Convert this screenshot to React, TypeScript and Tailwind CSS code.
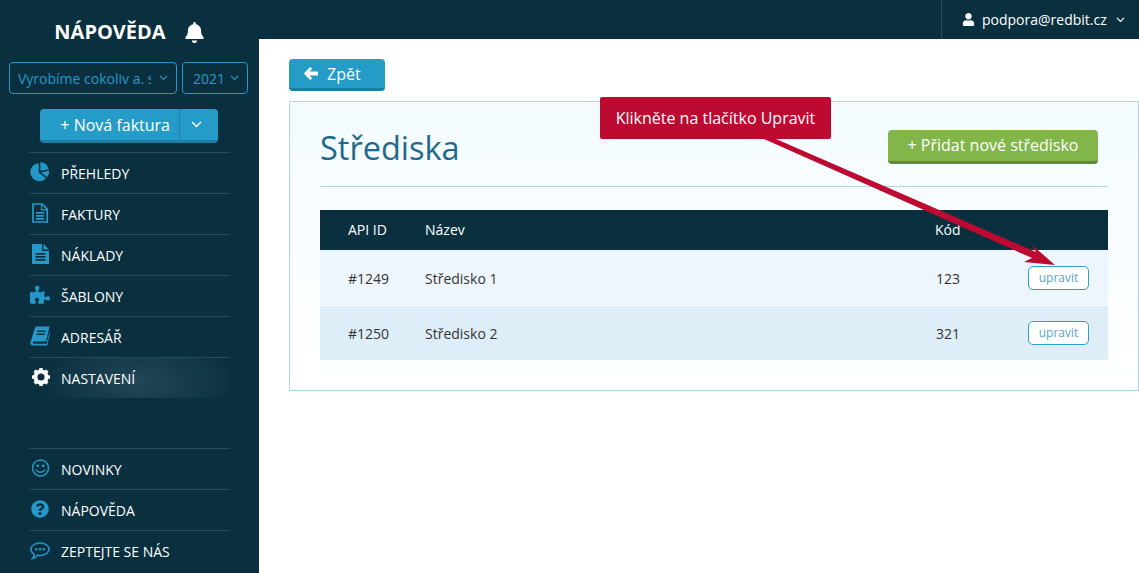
import { ReactNode } from 'react';
import { FaBell, FaPuzzlePiece, FaQuestionCircle, FaUser } from 'react-icons/fa';

const Chevron = ({ className }: { className?: string }) => (
  <svg viewBox="0 0 10 6" className={className} fill="none" stroke="currentColor" strokeWidth="1.3">
    <path d="M1 1l4 4 4-4" />
  </svg>
);

const Icon = ({ children }: { children: ReactNode }) => (
  <svg viewBox="0 0 20 20" className="h-[20px] w-[20px]" fill="currentColor">
    {children}
  </svg>
);

const PieIcon = () => (
  <Icon>
    <path d="M8.7 1.2A9 9 0 1 0 16 16.2L8.7 10.4Z" />
    <path d="M10.4 0.2A8.6 8.6 0 0 1 18.7 7.2L10.4 8.8Z" />
    <path d="M11 10.4L19.2 8.8A9 9 0 0 1 17.2 15.2Z" />
  </Icon>
);

const FileOutlineIcon = () => (
  <Icon>
    <path d="M3 1h9l5.2 5.2V19H3Z" fill="none" stroke="currentColor" strokeWidth="1.7" />
    <path d="M11.5 1v5.8h5.8" fill="none" stroke="currentColor" strokeWidth="1.2" />
    <path d="M6 9h8.2v1.7H6ZM6 12h8.2v1.7H6ZM6 15h8.2v1.7H6Z" />
  </Icon>
);

const FileSolidIcon = () => (
  <Icon>
    <path fillRule="evenodd" d="M2 0h10v7h7v13H2ZM5.5 9v1.7h10V9Zm0 3v1.7h10V12Zm0 3v1.7h10V15Z" />
    <path d="M13.5 0L19 5.5h-5.5Z" />
  </Icon>
);

const BookIcon = () => (
  <Icon>
    <path fillRule="evenodd" d="M5.5 0.5H19.5L16 15.5H3.5C2.7 15.5 2.5 17.8 3.5 17.8H16.6L19.6 5.5L20 6.5L17.2 19.6H3C0.6 19.6 0 17.5 0.6 15.5ZM7.5 4.5L7.2 6H15.5L15.8 4.5ZM6.7 7.5L6.4 9H14.7L15 7.5Z" />
  </Icon>
);

const CogIcon = () => (
  <Icon>
    <circle cx="11" cy="10" r="5.6" fill="none" stroke="currentColor" strokeWidth="4" />
    {[0, 45, 90, 135, 180, 225, 270, 315].map((a) => (
      <rect key={a} x="9.2" y="1" width="3.6" height="4" rx="0.6" transform={`rotate(${a} 11 10)`} />
    ))}
  </Icon>
);

const SmileIcon = () => (
  <Icon>
    <circle cx="10.5" cy="10" r="8" fill="none" stroke="currentColor" strokeWidth="1.5" />
    <circle cx="7.8" cy="7.8" r="1.4" />
    <circle cx="13.2" cy="7.8" r="1.4" />
    <path d="M6.2 12c1.6 2.9 7 2.9 8.600 0" fill="none" stroke="currentColor" strokeWidth="1.4" strokeLinecap="round" />
  </Icon>
);

const CommentIcon = () => (
  <Icon>
    <path
      d="M10 3c5 0 9 2.600 9 6.200s-4 6.200-9 6.200c-.9 0-1.700-.1-2.500-.2-.9 1.400-2.600 2.800-4.900 3.200 1-1 1.700-2.400 1.600-4.200C2.200 13.100 1 11.300 1 9.200 1 5.600 5 3 10 3Z"
      fill="none"
      stroke="currentColor"
      strokeWidth="1.5"
    />
    <circle cx="6.300" cy="9.200" r="1.200" />
    <circle cx="10" cy="9.200" r="1.200" />
    <circle cx="13.700" cy="9.200" r="1.200" />
  </Icon>
);

const BackArrow = () => (
  <svg viewBox="0 0 14 13" className="h-[13px] w-[14px]" fill="currentColor">
    <path d="M6.700 0.300L8.200 1.800L5.500 4.500H13.300Q14 4.500 14 5.200V7.800Q14 8.500 13.300 8.500H5.500L8.200 11.200L6.700 12.700Q6.300 13 5.900 12.700L0.300 7.100Q-0.100 6.500 0.300 5.900L5.900 0.300Q6.300 0 6.700 0.300Z" />
  </svg>
);

const NavItem = ({ icon, label, active }: { icon: ReactNode; label: string; active?: boolean }) => (
  <div
    className={`flex h-[41px] items-center border-t border-[#2b4c5a] text-[14px] text-white ${
      active ? 'bg-[radial-gradient(ellipse_100px_48px_at_55%_60%,#234557,#0a3040)]' : ''
    }`}
  >
    <span className={`mr-[10px] flex w-[22px] justify-center pb-[2px] ${active ? 'text-white' : 'text-[#2499c9]'}`}>{icon}</span>
    <span>{label}</span>
  </div>
);

const Row = ({ id, name, code, alt }: { id: string; name: string; code: string; alt?: boolean }) => (
  <div className={`flex items-center text-[14px] text-[#333] ${alt ? 'h-[54px] bg-[#deeef8]' : 'mb-px h-[55px] bg-[#edf6fc] pt-px'}`}>
    <span className="w-[105px] pl-[28px]">{id}</span>
    <span className="flex-1">{name}</span>
    <span className="w-[92px]">{code}</span>
    <span className="mr-[19px] flex h-[24px] w-[61px] items-center justify-center rounded-[5px] border border-[#2a9fd0] bg-white text-[12px] text-[#5aa5c8]">
      upravit
    </span>
  </div>
);

export default function App() {
  return (
    <div className="relative flex h-[573px] overflow-hidden bg-white font-['Open_Sans',sans-serif]">
      <aside className="flex w-[259px] shrink-0 flex-col bg-[#0a3040]">
        <div className="flex h-[62px] items-center justify-center gap-[18px] pt-[2px]">
          <span className="text-[20px] font-bold text-white">NÁPOVĚDA</span>
          <FaBell className="text-[21px] text-white" />
        </div>
        <div className="flex gap-[5px] pl-[9px]">
          <div className="flex h-[32px] w-[168px] items-center justify-between rounded-[4px] border border-[#2499c9] pl-[8px] pr-[8px] text-[14px] text-[#2499c9]">
            <span className="w-[133px] overflow-hidden whitespace-nowrap">Vyrobíme cokoliv a. s.</span>
            <Chevron className="w-[9px]" />
          </div>
          <div className="flex h-[32px] w-[66px] items-center justify-between rounded-[4px] border border-[#2499c9] pl-[10px] pr-[8px] text-[14px] text-[#2499c9]">
            <span>2021</span>
            <Chevron className="w-[9px]" />
          </div>
        </div>
        <div className="ml-[40px] mt-[15px] flex h-[34px] w-[178px] rounded-[4px] border-b-[3px] border-[#1a7ea6] bg-[#259bc8] text-[16px] text-white">
          <span className="flex w-[140px] items-center justify-end border-r border-[#1a7ea6] pr-[9px]">+ Nová faktura</span>
          <span className="flex flex-1 items-center justify-center pr-[6px]">
            <Chevron className="w-[11px]" />
          </span>
        </div>
        <nav className="mx-[29px] mt-[9px] flex-1">
          <NavItem icon={<PieIcon />} label="PŘEHLEDY" />
          <NavItem icon={<FileOutlineIcon />} label="FAKTURY" />
          <NavItem icon={<FileSolidIcon />} label="NÁKLADY" />
          <NavItem icon={<FaPuzzlePiece className="h-[20px] w-[20px]" />} label="ŠABLONY" />
          <NavItem icon={<BookIcon />} label="ADRESÁŘ" />
          <NavItem icon={<CogIcon />} label="NASTAVENÍ" active />
          <div className="h-[50px]" />
          <NavItem icon={<SmileIcon />} label="NOVINKY" />
          <NavItem icon={<FaQuestionCircle className="h-[18px] w-[18px]" />} label="NÁPOVĚDA" />
          <NavItem icon={<CommentIcon />} label="ZEPTEJTE SE NÁS" />
        </nav>
      </aside>

      <main className="flex flex-1 flex-col">
        <header className="flex h-[39px] justify-end bg-[#0a3040]">
          <div className="flex w-[198px] items-center gap-[7px] border-l border-[#2b4c5a] pl-[20px] text-[14px] text-white">
            <FaUser className="text-[13px]" />
            <span>podpora@redbit.cz</span>
            <Chevron className="ml-[2px] w-[9px]" />
          </div>
        </header>
        <div className="pl-[30px] pt-[20px]">
          <div className="flex h-[32px] w-[96px] items-center gap-[9px] rounded-[4px] border-b-[3px] border-[#1a7ea6] bg-[#259bc8] pl-[15px] text-[16px] text-white">
            <BackArrow />
            <span>Zpět</span>
          </div>
          <section className="mt-[10px] h-[290px] border border-[#aed6e6] bg-[linear-gradient(#f3fbff,#ffffff)] pl-[30px] pr-[30px]">
            <div className="flex h-[85px] items-center justify-between border-b border-[#aed6e6] pr-[10px]">
              <h1 className="pt-[8px] text-[32.5px] text-[#1f6a8c]">Střediska</h1>
              <div className="mt-[5px] flex h-[34px] w-[210px] items-center justify-center rounded-[4px] border-b-[3px] border-[#5f8a34] bg-[#82b54a] text-[16px] text-white">
                + Přidat nové středisko
              </div>
            </div>
            <div className="mt-[23px]">
              <div className="flex h-[40px] items-center bg-[#0a3040] pb-[2px] text-[14px] text-white">
                <span className="w-[105px] pl-[28px]">API ID</span>
                <span className="flex-1">Název</span>
                <span className="w-[173px]">Kód</span>
              </div>
              <Row id="#1249" name="Středisko 1" code="123" />
              <Row id="#1250" name="Středisko 2" code="321" alt />
            </div>
          </section>
        </div>
      </main>

      <div className="absolute left-[600px] top-[97px] flex h-[42px] w-[231px] items-center justify-center rounded-[2px] bg-[#bd0a30] text-[16px] text-white">
        Klikněte na tlačítko Upravit
      </div>
      <svg className="absolute left-0 top-0" width="1139" height="573" fill="#bd0a30">
        <path d="M764 139L776 139L1036 252L1032 245L1055 265L1024 262L1032 258Z" />
      </svg>
    </div>
  );
}
